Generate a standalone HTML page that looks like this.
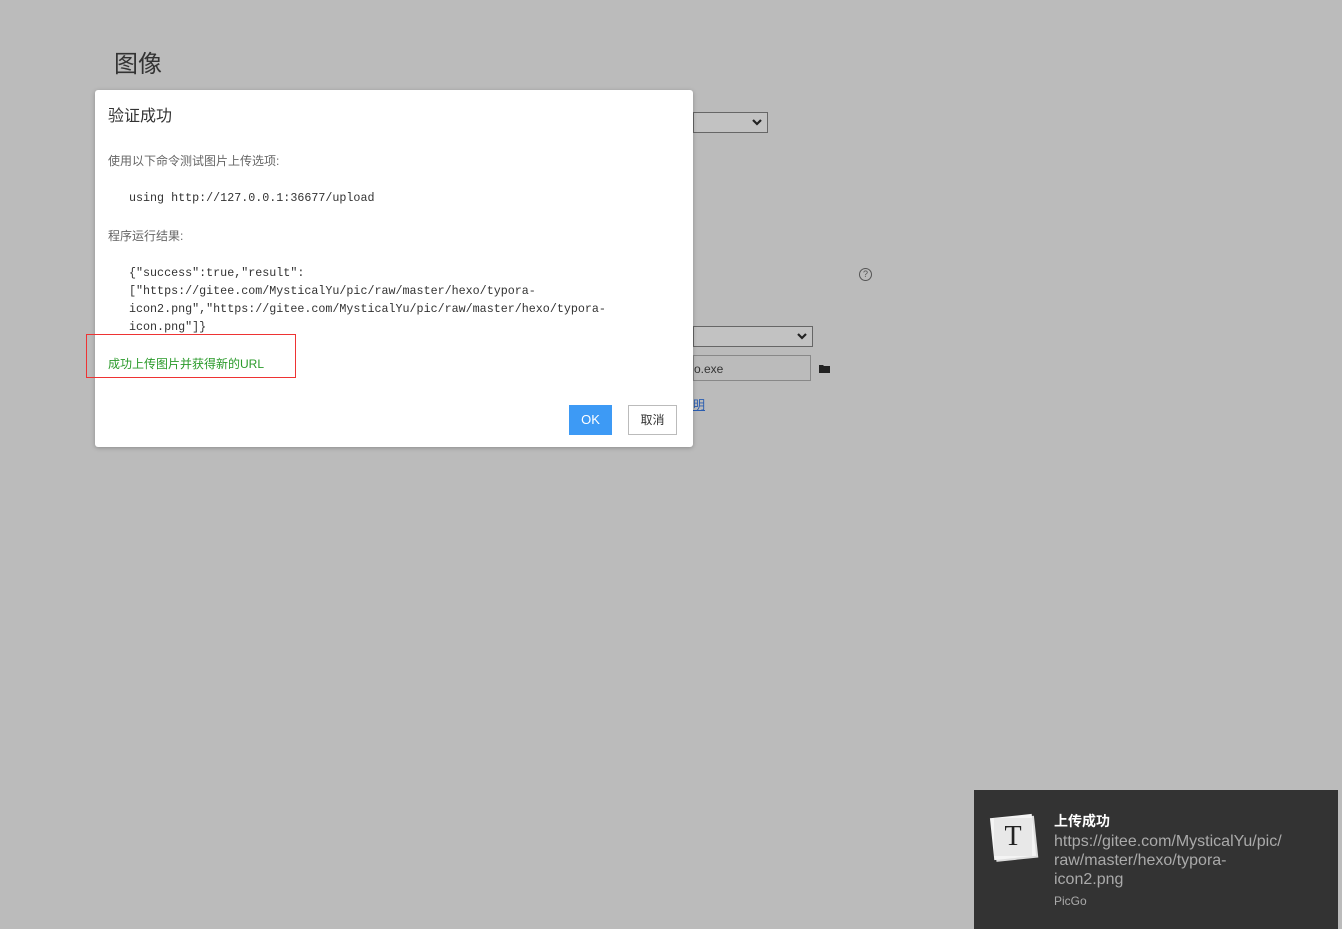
<!DOCTYPE html>
<html><head><meta charset="utf-8"><style>
body{margin:0;width:1342px;height:929px;background:#bbbbbb;position:relative;overflow:hidden;font-family:"Liberation Sans","Noto Sans CJK SC",sans-serif;}
.a{position:absolute;}
.mono{font-family:"Liberation Mono","Noto Sans CJK SC",monospace;font-size:11.7px;color:#333;}
.sel{position:absolute;border:1px solid #666;height:19px;background:#c2c2c2;}
.chev{position:absolute;right:5px;top:5px;}
</style></head><body>
<div class="a" style="left:114px;top:44px;font-size:24px;color:#333;">图像</div>
<div class="sel" style="left:693px;top:112px;width:73px;"><svg class="chev" width="10" height="8" viewBox="0 0 10 8"><path d="M1 2L5 6L9 2" stroke="#222" stroke-width="2.2" fill="none"/></svg></div>
<div class="a" style="left:859px;top:268px;width:11px;height:11px;border:1px solid #555;border-radius:50%;font-size:9px;line-height:11px;text-align:center;color:#555;">?</div>
<div class="sel" style="left:693px;top:326px;width:118px;"><svg class="chev" width="10" height="8" viewBox="0 0 10 8"><path d="M1 2L5 6L9 2" stroke="#222" stroke-width="2.2" fill="none"/></svg></div>
<div class="a" style="left:693px;top:355px;width:118px;height:26px;border:1px solid #888;box-sizing:border-box;font-size:12px;line-height:26px;color:#333;">o.exe</div>
<svg class="a" style="left:819px;top:364px;" width="12" height="10" viewBox="0 0 12 10"><path d="M0 1h4l1 1h6v7H0z" fill="#222"/></svg>
<div class="a" style="left:693px;top:396px;font-size:12px;color:#2a5db0;text-decoration:underline;">明</div>
<div class="a" style="left:95px;top:90px;width:598px;height:357px;background:#fff;border-radius:3px;box-shadow:0 1px 4px rgba(0,0,0,.25);">
 <div class="a" style="left:13px;top:12px;font-size:16px;color:#333;">验证成功</div>
 <div class="a" style="left:13px;top:62px;font-size:12px;color:#666;">使用以下命令测试图片上传选项:</div>
 <div class="a mono" style="left:34px;top:101px;">using http://127.0.0.1:36677/upload</div>
 <div class="a" style="left:13px;top:137px;font-size:12px;color:#666;">程序运行结果:</div>
 <div class="a mono" style="left:34px;top:174px;line-height:18px;white-space:pre;">{"success":true,"result":
["https://gitee.com/MysticalYu/pic/raw/master/hexo/typora-
icon2.png","https://gitee.com/MysticalYu/pic/raw/master/hexo/typora-
icon.png"]}</div>
 <div class="a" style="left:13px;top:265px;font-size:12px;color:#2a9a2a;">成功上传图片并获得新的URL</div>
 <div class="a" style="left:474px;top:315px;width:43px;height:30px;background:#3d9af5;color:#fff;font-size:13px;line-height:30px;text-align:center;">OK</div>
 <div class="a" style="left:533px;top:315px;width:47px;height:28px;border:1px solid #bbb;color:#333;font-size:12px;line-height:28px;text-align:center;">取消</div>
</div>
<div class="a" style="left:86px;top:334px;width:208px;height:42px;border:1px solid #e33;"></div>
<div class="a" style="left:974px;top:790px;width:364px;height:139px;background:#333;">
 <div class="a" style="left:18px;top:26px;width:42px;height:42px;background:#f4f4f4;transform:rotate(-6deg);box-shadow:2px 2px 0 #ddd;"></div>
 <div class="a" style="left:20px;top:28px;width:38px;height:38px;background:#e8e8e8;font-family:'Liberation Serif',serif;font-size:28px;line-height:38px;text-align:center;color:#222;">T</div>
 <div class="a" style="left:80px;top:21px;font-size:14px;font-weight:bold;color:#fff;">上传成功</div>
 <div class="a" style="left:80px;top:42px;font-size:16px;line-height:19px;color:#aaa;width:260px;">https://gitee.com/MysticalYu/pic/<br>raw/master/hexo/typora-<br>icon2.png</div>
 <div class="a" style="left:80px;top:104px;font-size:12px;color:#aaa;">PicGo</div>
</div>
</body></html>
